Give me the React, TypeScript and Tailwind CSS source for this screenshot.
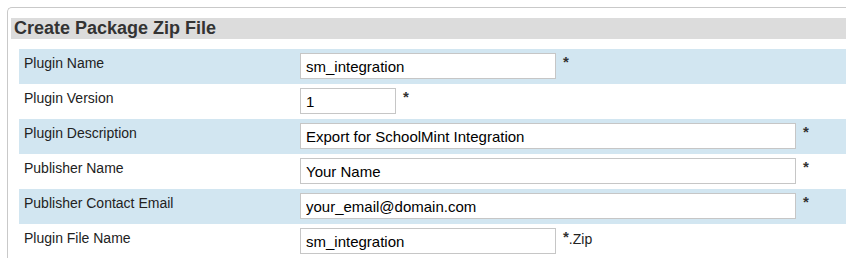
import React from 'react';

const rows = [
  { label: 'Plugin Name', value: 'sm_integration', w: 'w-[256px]', suffix: '' },
  { label: 'Plugin Version', value: '1', w: 'w-[96px]', suffix: '' },
  { label: 'Plugin Description', value: 'Export for SchoolMint Integration', w: 'w-[496px]', suffix: '' },
  { label: 'Publisher Name', value: 'Your Name', w: 'w-[496px]', suffix: '' },
  { label: 'Publisher Contact Email', value: 'your_email@domain.com', w: 'w-[496px]', suffix: '' },
  { label: 'Plugin File Name', value: 'sm_integration', w: 'w-[256px]', suffix: '.Zip' },
];

const App = () => {
  return (
    <div className="w-[846px] h-[258px] overflow-hidden bg-white font-['Liberation_Sans',Arial,sans-serif] pt-[7px] pl-[7px]">
      <div className="w-[900px] h-[300px] border-l border-t border-[#c9c9c9] rounded-tl-[5px] pt-[10px] pl-[3px]">
        {/* Header */}
        <div className="h-[21px] bg-[#dcdcdc] pl-[3px] text-[18px] leading-[21px] font-bold text-[#333]">
          Create Package Zip File
        </div>

        {/* Form rows */}
        <div className="mt-[10px] ml-[8px]">
          {rows.map((row, i) => (
            <div
              key={row.label}
              className={`flex h-[35px] ${i % 2 === 0 ? 'bg-[#d2e6f1]' : 'bg-white'}`}
            >
              <div className="w-[281px] pl-[5px] pt-[6px] text-[14px] leading-[17px] text-[#222]">
                {row.label}
              </div>
              <div className="flex items-start pt-[4px]">
                <input
                  readOnly
                  value={row.value}
                  className={`${row.w} h-[26px] border border-[#c6c6c6] bg-white px-[5px] text-[15px] text-black outline-none font-['Liberation_Sans',Arial,sans-serif]`}
                />
                <span className="ml-[7px] mt-[1px] text-[15px] leading-[16px] font-bold text-[#333]">*</span>
                {row.suffix && (
                  <span className="mt-[3px] text-[14px] leading-[16px] text-[#222]">{row.suffix}</span>
                )}
              </div>
            </div>
          ))}
        </div>
      </div>
    </div>
  );
};

export default App;
